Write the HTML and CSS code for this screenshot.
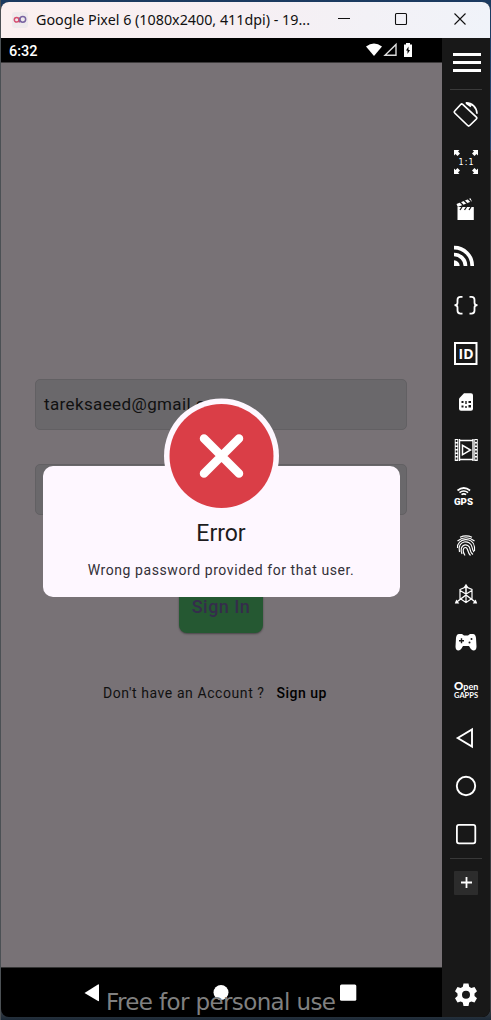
FILE: index.html
```html
<!DOCTYPE html>
<html lang="en">
<head>
<meta charset="utf-8">
<title>Google Pixel 6</title>
<link rel="stylesheet" href="styles.css">
</head>
<body>
<div class="window">
  <header class="titlebar">
    <svg class="logo" width="16" height="16" viewBox="0 0 16 16" fill="none" stroke-width="1.5"><rect width="16" height="16" rx="3" fill="#efeaec" stroke="none"/><path d="M7.500 5.500v5" stroke="#a54a82"/><circle cx="4.600" cy="7.800" r="2.300" stroke="#d64f70"/><circle cx="10.800" cy="7.300" r="2.900" stroke="#7964a2"/></svg>
    <svg class="title" width="282" height="36"><text x="0" y="23" textLength="274" lengthAdjust="spacingAndGlyphs">Google Pixel 6 (1080x2400, 411dpi) - 19...</text></svg>
    <svg class="controls" width="170" height="36" fill="none" stroke="#111" stroke-width="1.1"><path d="M16 16.500h12M132.500 11.500l11 11M143.500 11.500l-11 11"/><rect x="73.500" y="11.500" width="11" height="11" rx="1"/></svg>
  </header>
  <div class="main">
    <section class="phone">
      <div class="status">
        <span>6:32</span>
        <svg width="50" height="16" viewBox="0 0 50 16"><path d="M0 4.500Q8 -1.500 16 4.500L8 14z" fill="#fff"/><path d="M19 13.300H30V2.500z" fill="none" stroke="#ddd" stroke-width="1.400"/><path d="M38 2.500h2V1h4v1.500h2V15h-8z" fill="#fff"/><path d="M42.500 4.500l-2.500 4h1.500V12l2.500-4h-1.500z" fill="#000"/></svg>
      </div>
      <div class="screen">
        <form class="login">
          <div class="field">tareksaeed@gmail.com</div>
          <div class="field"></div>
          <div class="button">Sign In</div>
          <p class="signup"><span>Don't have an Account ?</span><b>Sign up</b></p>
        </form>
        <div class="dialog">
          <svg class="badge" width="116" height="116" viewBox="0 0 116 116"><circle cx="57.500" cy="58" r="57.500" fill="#fef7ff"/><circle cx="57.500" cy="58" r="52" fill="#da3e47"/><path d="M40 40.500l35 35M75 40.500l-35 35" stroke="#fff" stroke-width="8.500" stroke-linecap="round"/></svg>
          <h1>Error</h1>
          <p>Wrong password provided for that user.</p>
        </div>
      </div>
      <footer class="nav">
        <svg width="441" height="49" fill="#fff"><path d="M83.500 25l13.500-8.500q1-.5 1 .5v15.500q0 1-1 .5z"/><circle cx="220" cy="24.500" r="7.500"/><rect x="339" y="16.500" width="16.300" height="16.300" rx="1.500"/></svg>
        <svg class="watermark" width="240" height="30"><text x="3" y="22" textLength="230">Free for personal use</text></svg>
      </footer>
    </section>
    <aside class="tools">
      <div class="menu"><i></i><i></i><i></i></div>
      <svg viewBox="0 0 48 48"><path d="M12.700 21l6-6.500q1-1 2 0l13.700 12.500q1 1 0 2l-6.700 6.500q-1 1-2 0L12.700 23q-1-1 0-2z" stroke-width="1.700"/><path d="M24 12.800c6 0 10.800 4.500 11 11M24 13l5 3.500" stroke-width="1.700"/><path d="M23 12.300l6 1-1 2.500z" class="solid"/></svg>
      <svg viewBox="0 0 48 48"><g class="solid"><path d="M12 12h5.500l-1.500 1.500 2 2-2.500 2.500-2-2L12 17.500zM36 12v5.500L34.500 16l-2 2-2.500-2.500 2-2-1.500-1.500zM12 36v-5.500l1.500 1.500 2-2 2.500 2.500-2 2 1.500 1.500zM36 36h-5.500l1.500-1.500-2-2 2.500-2.500 2 2 1.500-1.500z"/><text x="16.500" y="27" textLength="15" font-size="8" class="ratio">1:1</text></g></svg>
      <svg viewBox="0 0 48 48"><path d="M15.500 21h16.300v13H15.500zM14.500 18l14-5.800 1.300 3-14 5.800z" class="solid"/><path d="M18 16l3 3M22 14.500l3 3M26 12.800l3 3M20 21l-2 3M24.500 21l-2 3M29 21l-2 3" stroke="#181818" stroke-width="1.300"/></svg>
      <svg viewBox="0 0 48 48"><path d="M12 13.700A18 18 0 0 1 30.200 32M12 20.500A11.500 11.500 0 0 1 23.500 32" stroke-width="3.700"/><path d="M12 26.300A5.700 5.700 0 0 1 17.700 32H12z" class="solid"/></svg>
      <svg viewBox="0 0 48 48"><path d="M20.500 14.800h-2q-3 0-3 3v3q0 2.400-3 2.400 3 0 3 2.400v3q0 3 3 3h2M27.500 14.800h2q3 0 3 3v3q0 2.400 3 2.400-3 0-3 2.400v3q0 3-3 3h-2" stroke-width="1.800"/></svg>
      <svg viewBox="0 0 48 48"><rect x="13" y="13" width="21.500" height="21" stroke-width="2"/><text x="16.500" y="29" textLength="15" lengthAdjust="spacingAndGlyphs" class="ident" font-size="15">ID</text></svg>
      <svg viewBox="0 0 48 48"><path d="M22 15.300h7q2 0 2 2v13.400q0 2-2 2H19q-2 0-2-2V20.500z" class="solid"/><path d="M19.500 23h2v2h-2zM23.300 23h1.400v3h-1.400zM26.500 23h2.500v2h-2.500zM19.500 27.500h2v2h-2zM23.300 28h1.400v2h-1.400zM26.500 27h2.500v2.500h-2.500z" fill="#181818" stroke="none"/></svg>
      <svg viewBox="0 0 48 48"><path d="M14.500 13v22M34 13v22" stroke-width="3.500"/><path d="M14.500 14v21M34 14v21" stroke="#181818" stroke-width="1.600" stroke-dasharray="2.100 1.400"/><path d="M17.500 13v22M31 13v22M17 14.500h14M17 33.500h14" stroke-width="1.400"/><path d="M20.500 19.300v9.500l8-4.800z" stroke-width="1.500"/></svg>
      <svg viewBox="0 0 48 48"><path d="M15.500 16.500q6.300-5 12.600 0M17.500 18.600q4.300-3.200 8.600 0M19.500 20.600q2.300-1.500 4.600 0" stroke-width="1.700"/><text x="12" y="31.300" textLength="19" lengthAdjust="spacingAndGlyphs" font-size="8.500" class="label">GPS</text></svg>
      <svg viewBox="0 0 48 48"><path d="M18 15.200q6-2.500 12 0M15.500 19q8.500-6.500 17 0M15.500 26c-1-10 16-12 17-1v4M17.500 30c-3-12 11-13 12.500-5 .5 3 1 4 2 5M20 32c-4-10 7-12 8-5 .5 3 2 5 3 5.500M23 33.500c-3-4-2-8 .5-8 3 0 1.500 5 5 8" stroke-width="1.150"/></svg>
      <svg viewBox="0 0 48 48"><path d="M24 16v8M24 25l-10 7.500M24 25l10 7.500" stroke-width="1.500"/><path d="M18 19.500l6-2.500 6 2.500v9l-6 4-6-4zM18 20.500l6 3.500 6-3.500M24 24v9" stroke-width="1.200"/><path d="M24 13.800l2.500 4h-5zM12.800 33.500l1.500-4 3 4zM35.200 33.500l-1.500-4-3 4z" class="solid"/></svg>
      <svg viewBox="0 0 48 48"><path d="M17 16h3l2 1.500h4l2-1.500h3q2.500 0 3 4l.5 8.500q0 4-3 4-1.500 0-3-2L27 28h-6l-1.500 2.500q-1.500 2-3 2-3 0-3-4L14 20q.5-4 3-4z" class="solid"/><path d="M17 22.800h5M19.500 20.300v5" stroke="#181818" stroke-width="1.400"/><circle cx="29.500" cy="21" r="1" fill="#181818" stroke="none"/><circle cx="27.500" cy="24.500" r="1" fill="#181818" stroke="none"/></svg>
      <svg viewBox="0 0 48 48"><text x="12" y="23.500" class="open"><tspan font-weight="900" font-size="11.500">O</tspan><tspan font-size="10" textLength="15" lengthAdjust="spacingAndGlyphs">pen</tspan></text><text x="12" y="31.500" textLength="24" lengthAdjust="spacingAndGlyphs" font-size="7.400" class="open">GAPPS</text></svg>
      <svg viewBox="0 0 48 48"><path d="M15.700 24L30 15.500v17z" stroke-width="1.900"/></svg>
      <svg viewBox="0 0 48 48"><circle cx="24" cy="24" r="9.200" stroke-width="1.900"/></svg>
      <svg viewBox="0 0 48 48"><rect x="14.900" y="14.900" width="18.400" height="18.400" rx="2" stroke-width="1.800"/></svg>
      <div class="more"><svg viewBox="0 0 48 48"><rect x="12" y="12" width="24" height="24" rx="1" fill="#2c2c2c" stroke="none"/><path d="M19 23.500h11M24.500 18v11" stroke-width="1.800"/></svg></div>
      <svg class="gear" viewBox="0 0 48 48"><path class="solid" fill-rule="evenodd" d="M21.500 12.500h5l.7 3.300 2.100 1.200 3.200-1.100 2.500 4.300-2.500 2.300v2.400l2.500 2.300-2.500 4.300-3.200-1.100-2.100 1.200-.7 3.300h-5l-.7-3.300-2.100-1.200-3.200 1.100-2.500-4.300 2.500-2.300v-2.400L13 20.200l2.500-4.300 3.200 1.100 2.100-1.200zM24 19.800a4 4 0 1 0 0 8 4 4 0 0 0 0-8z"/></svg>
    </aside>
  </div>
</div>
</body>
</html>
```
FILE: styles.css
```css
* { box-sizing: border-box; }
body {
  margin: 0;
  height: 1020px;
  padding: 2px 1px;
  overflow: hidden;
  background: linear-gradient(90deg, #4b5054 0 1px, transparent 1px), linear-gradient(#1b3a60, #2d4b75 150px, #3a3d42 151px 1010px, #1c2a38);
  font-family: Roboto, sans-serif;
}
.window {
  width: 489px;
  height: 1015px;
  border-radius: 8px;
  overflow: hidden;
  background: #000;
}
.titlebar {
  display: flex;
  align-items: center;
  height: 36px;
  padding-left: 11px;
  background: linear-gradient(90deg, #fbf0f0, #f6eff3 50%, #f0f3f9);
}
.logo { flex: none; }
.title {
  flex: none;
  margin-left: 8px;
  font: 14.200px "Noto Sans", sans-serif;
}
.title text { fill: #111; }
.controls { flex: none; margin-left: 4px; }
.main { display: flex; height: 979px; }
.phone { width: 441px; }
.status {
  display: flex;
  justify-content: space-between;
  align-items: center;
  height: 25px;
  padding: 0 26px 0 8px;
  border-bottom: 1px solid #3c3a3b;
  color: #fff;
  font-size: 14.500px;
  font-weight: 500;
}
.status span { padding-top: 2px; }
.screen {
  position: relative;
  height: 904px;
  padding-top: 316px;
  background: #787276;
}
.login { margin: 0 35px 0 34px; }
.field {
  height: 51px;
  margin-bottom: 34px;
  padding-left: 8px;
  border: 1px solid #626063;
  border-radius: 5px;
  background: #6a686b;
  color: #111;
  font-size: 17px;
  line-height: 49px;
  letter-spacing: .38px;
}
.button {
  width: 84px;
  height: 52px;
  margin: 66px auto 0;
  border-radius: 8px;
  background: #255832;
  box-shadow: 0 1px 2px #0006;
  color: #352c4c;
  font-size: 18px;
  font-weight: 500;
  line-height: 52px;
  letter-spacing: .45px;
  text-align: center;
}
.signup {
  display: flex;
  gap: 12px;
  margin: 51px 0 0 68px;
  font-size: 14px;
  line-height: 18px;
  letter-spacing: .58px;
  color: #111;
  white-space: nowrap;
}
.signup b { font-weight: 500; letter-spacing: .5px; color: #000; }
.dialog {
  position: absolute;
  left: 41.500px;
  top: 403px;
  width: 357px;
  height: 130.500px;
  padding-top: 52px;
  border-radius: 10px;
  background: #fef7ff;
  color: #1d1b20;
  text-align: center;
}
.badge {
  position: absolute;
  left: 121px;
  top: -68px;
}
.dialog h1 {
  margin: 0;
  font-size: 23px;
  font-weight: 400;
  line-height: 31px;
}
.dialog p {
  margin: 11px 0 0;
  font-size: 14px;
  line-height: 20px;
  letter-spacing: .58px;
  color: #333038;
}
.nav {
  position: relative;
  height: 50px;
  border-top: 1px solid #333;
}
.nav svg { display: block; }
.nav .watermark {
  position: absolute;
  left: 102px;
  top: 20px;
  font: 23px "DejaVu Sans", sans-serif;
}
.watermark text { fill: #808080; }
.tools {
  display: flex;
  flex-direction: column;
  width: 48px;
  background: #181818;
}
.tools svg {
  display: block;
  flex: none;
  width: 48px;
  height: 48px;
  fill: none;
  stroke: #fff;
}
.tools .solid, .tools text { fill: #fff; stroke: none; }
.menu {
  display: flex;
  flex: none;
  flex-direction: column;
  gap: 5px;
  height: 52px;
  margin: 0 8px;
  padding: 15px 1px 0 3px;
  border-bottom: 1px solid #3a3a3a;
}
.menu i { flex: none; height: 3px; background: #fff; }
.label { font-family: Roboto, sans-serif; font-weight: 900; }
.ident { font-family: "Open Sans", sans-serif; font-weight: 700; }
.ratio { font-family: "DejaVu Sans", sans-serif; }
.open { font-family: Lato, sans-serif; font-weight: 700; }
.more { height: 49px; border-top: 1px solid #383838; margin: 0 8px; }
.more svg { margin-left: -8px; }
.tools .gear { margin: auto 0 -2px; }
```
